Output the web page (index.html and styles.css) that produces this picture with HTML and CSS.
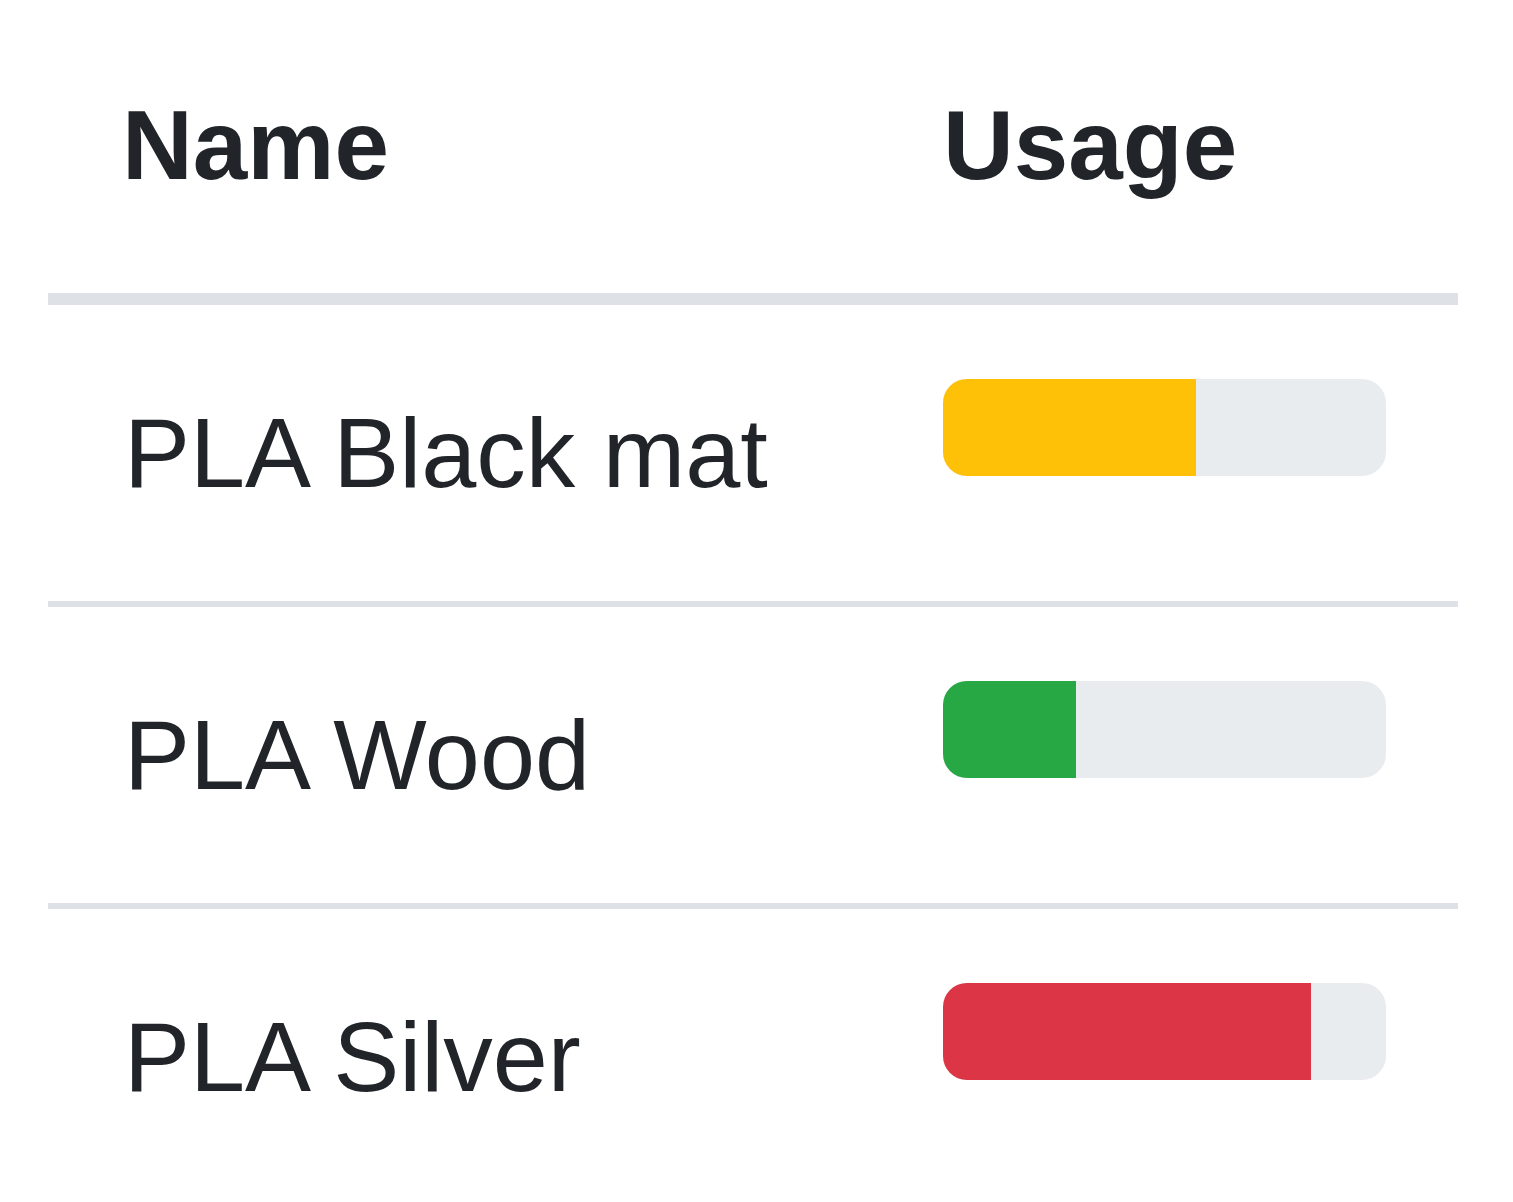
FILE: index.html
```html
<!DOCTYPE html>
<html>
<head>
<meta charset="utf-8">
<link rel="stylesheet" href="styles.css">
</head>
<body>
<table class="table">
  <thead>
    <tr><th class="col-name">Name</th><th class="col-usage">Usage</th></tr>
  </thead>
  <tbody>
    <tr><td class="name">PLA Black mat</td><td class="usage"><div class="progress"><div class="bar bar-warning" style="width:57%"></div></div></td></tr>
    <tr><td class="name">PLA Wood</td><td class="usage"><div class="progress"><div class="bar bar-success" style="width:30%"></div></div></td></tr>
    <tr><td class="name">PLA Silver</td><td class="usage"><div class="progress"><div class="bar bar-danger" style="width:83%"></div></div></td></tr>
  </tbody>
</table>
</body>
</html>
```
FILE: styles.css
```css
html, body { margin: 0; padding: 0; background: #fff; }
body {
  font-family: "Liberation Sans", Arial, sans-serif;
  color: #212529;
  font-size: 98px;
  line-height: 148px;
}
.table {
  border-collapse: collapse;
  margin: -3px 0 0 48px;
  width: 1410px;
}
.table th, .table td {
  padding: 74px;
  text-align: left;
  vertical-align: top;
}
.table th { font-weight: bold; border-bottom: 12px solid #dee2e6; }
.table td { border-top: 6px solid #dee2e6; }
.table .name { padding-left: 76px; font-size: 99px; }
.table .usage { padding-right: 72px; }
.col-name { width: 673px; }
.col-usage { padding-left: 76px; }
.progress {
  height: 97px;
  background: #e9ecef;
  border-radius: 24px;
  overflow: hidden;
  display: flex;
}
.bar { height: 100%; }
.bar-warning { background: #ffc107; }
.bar-success { background: #28a745; }
.bar-danger { background: #dc3545; }
```
